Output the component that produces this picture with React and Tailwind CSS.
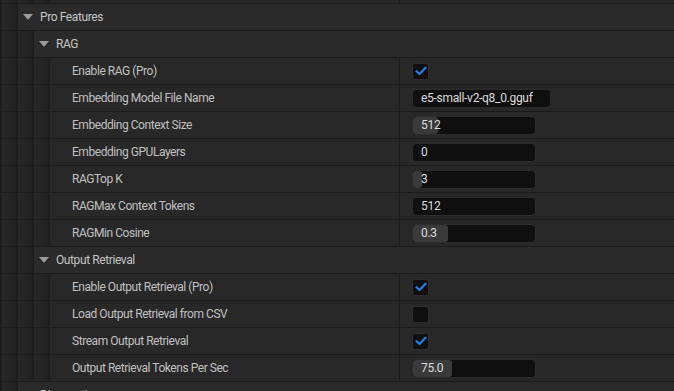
import React from "react";

const font = { fontFamily: "Roboto, 'Liberation Sans', sans-serif" };

const Strips = ({ n }) => (
  <>
    {Array.from({ length: n }).map((_, i) => (
      <div
        key={i}
        className={`h-full shrink-0 bg-gradient-to-r from-[#282828] to-[#202020] ${
          i === 0 ? "w-[17px] border-l-2 border-[#1c1c1c]" : "w-[16px] border-l border-[#1b1b1b]"
        }`}
      />
    ))}
  </>
);

const Arrow = () => (
  <svg width="10" height="6" viewBox="0 0 10 6" className="shrink-0">
    <path d="M0 0 L10 0 L5 6 Z" fill="#9a9a9a" />
  </svg>
);

const Category = ({ depth, label }) => (
  <div className="flex h-[26px] shrink-0">
    <Strips n={depth} />
    <div className="flex flex-1 items-center gap-[7px] border-l border-[#1b1b1b] bg-[#2a2a2a] pl-[5px] text-[12px] tracking-[-0.4px] text-[#c4c4c4]">
      <Arrow />
      <span>{label}</span>
    </div>
  </div>
);

const Check = ({ on }) => (
  <div className="flex h-[17px] w-[17px] items-center justify-center rounded-[3px] border border-[#2e2e2e] bg-[#0f0f0f]">
    {on && (
      <svg width="12" height="10" viewBox="0 0 12 10">
        <path d="M1.5 5.2 L4.5 8 L10.5 1.8" fill="none" stroke="#1f82e8" strokeWidth="2.2" strokeLinecap="round" strokeLinejoin="round" />
      </svg>
    )}
  </div>
);

const Field = ({ value, wide, fill }) => (
  <div
    className={`relative flex h-[19px] items-center overflow-hidden rounded-[4px] border border-[#2c2c2c] bg-[#0f0f0f] ${
      wide ? "w-[139px]" : "w-[124px]"
    }`}
  >
    {fill > 0 && (
      <div className="absolute inset-y-0 left-0 rounded-[3px] bg-[#3a3a3a]" style={{ width: fill }} />
    )}
    <span className="relative pl-[8px] text-[12px] tracking-[-0.3px] text-[#dcdcdc]">{value}</span>
  </div>
);

const Prop = ({ label, children }) => (
  <div className="flex h-[26px] shrink-0">
    <Strips n={3} />
    <div className="flex flex-1 border-l border-[#1b1b1b] bg-[#282828]">
      <div className="flex w-[349px] items-center pl-[22px] text-[12px] tracking-[-0.45px] text-[#c0c0c0]">{label}</div>
      <div className="flex flex-1 items-center border-l border-[#1b1b1b] pl-[12px]">{children}</div>
    </div>
  </div>
);

export default function App() {
  return (
    <div style={font} className="h-[391px] w-[674px] overflow-hidden bg-[#1b1b1b]">
      <div className="mt-[-23px] flex flex-col gap-px">
        <Prop label="" />
        <Category depth={1} label="Pro Features" />
        <Category depth={2} label="RAG" />
        <Prop label="Enable RAG (Pro)"><Check on /></Prop>
        <Prop label="Embedding Model File Name"><Field value="e5-small-v2-q8_0.gguf" wide /></Prop>
        <Prop label="Embedding Context Size"><Field value="512" fill={25} /></Prop>
        <Prop label="Embedding GPULayers"><Field value="0" /></Prop>
        <Prop label="RAGTop K"><Field value="3" fill={9} /></Prop>
        <Prop label="RAGMax Context Tokens"><Field value="512" /></Prop>
        <Prop label="RAGMin Cosine"><Field value="0.3" fill={35} /></Prop>
        <Category depth={2} label="Output Retrieval" />
        <Prop label="Enable Output Retrieval (Pro)"><Check on /></Prop>
        <Prop label="Load Output Retrieval from CSV"><Check /></Prop>
        <Prop label="Stream Output Retrieval"><Check on /></Prop>
        <Prop label="Output Retrieval Tokens Per Sec"><Field value="75.0" fill={39} /></Prop>
        <Category depth={1} label="Diagnostics" />
      </div>
    </div>
  );
}
